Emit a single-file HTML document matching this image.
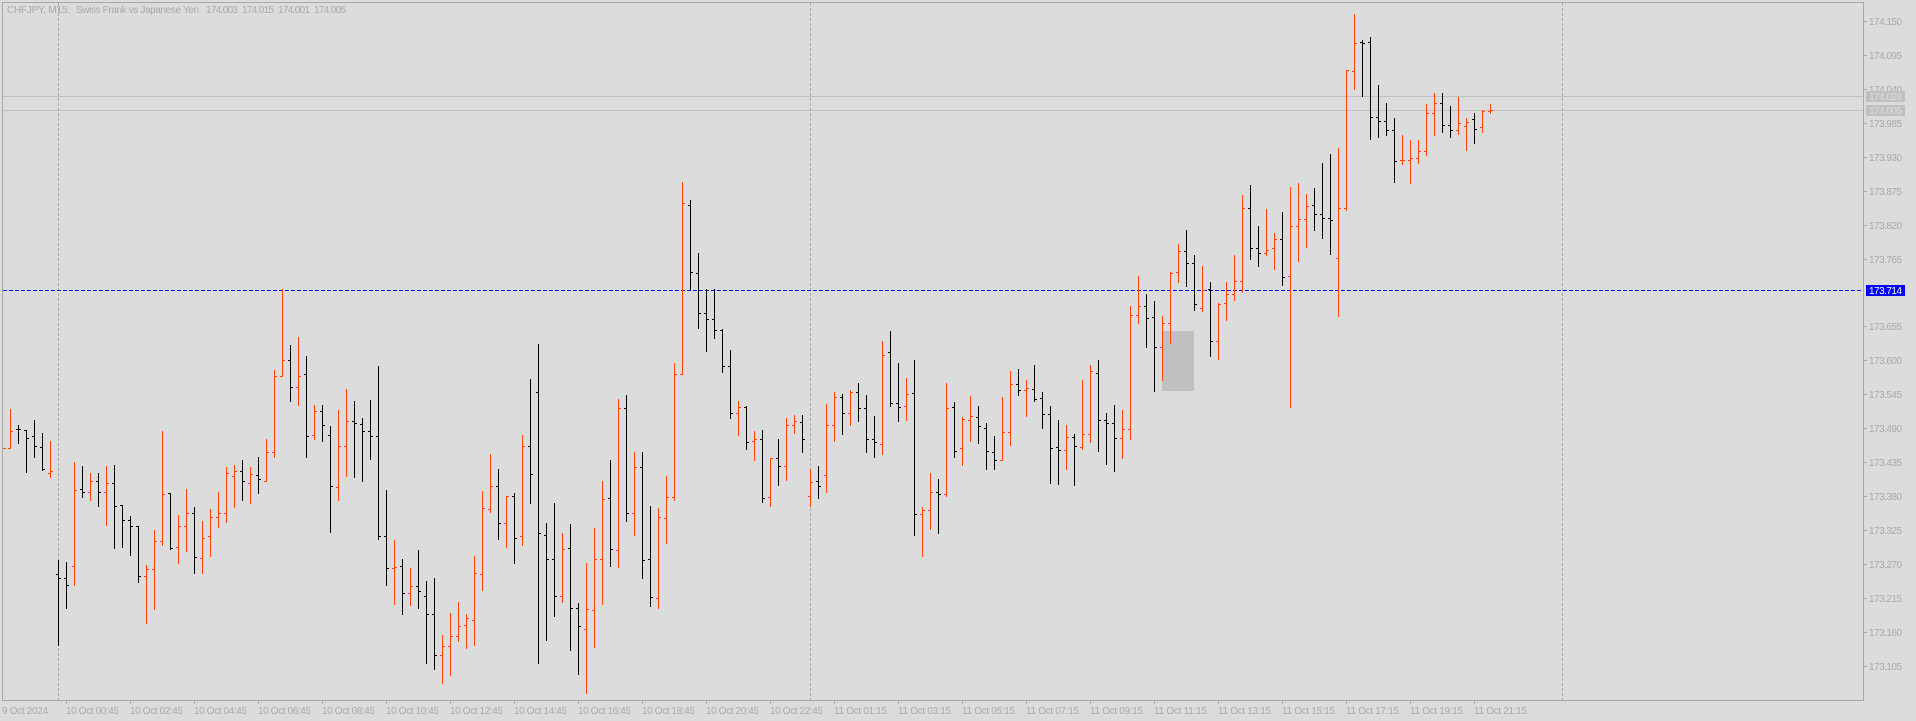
<!DOCTYPE html>
<html>
<head>
<meta charset="utf-8">
<title>CHFJPY, M15</title>
<style>
html,body{margin:0;padding:0;background:#dcdcdc;width:1916px;height:721px;overflow:hidden}
svg{display:block;position:absolute;left:0;top:0}
text{font-family:"Liberation Sans",sans-serif;font-size:10px;fill:#a9a9a9}
</style>
</head>
<body>
<svg width="1916" height="721" viewBox="0 0 1916 721" xmlns="http://www.w3.org/2000/svg">
<rect x="0" y="0" width="1916" height="721" fill="#dcdcdc"/>
<g shape-rendering="crispEdges">
<rect x="1162" y="331" width="32" height="60" fill="#c0c0c0"/>
<path d="M3 96.5H1863M3 110.5H1863" stroke="#c0c0c0" stroke-width="1" fill="none"/>
<path d="M58.5 3V700M810.5 3V700M1562.5 3V700" stroke="#a9a9a9" stroke-width="1" stroke-dasharray="3 2" fill="none"/>
<path d="M3 290.5H1863" stroke="#0000ff" stroke-width="1" stroke-dasharray="4 2" fill="none"/>
<path fill="none" stroke="#ff4500" stroke-width="1" d="M3 448.5h3M10.5 409V449M8 448.5h2M11 431.5h2M50.5 441V478M48 473.5h2M51 471.5h2M74.5 462V586M72 566.5h2M75 490.5h2M90.5 473V501M88 492.5h2M91 481.5h2M106.5 466V526M104 492.5h2M107 483.5h2M146.5 565V624M144 576.5h2M147 569.5h2M154.5 530V610M152 569.5h2M155 541.5h2M162.5 431V546M160 541.5h2M163 494.5h2M178.5 515V564M176 547.5h2M179 526.5h2M186.5 489V552M184 526.5h2M187 513.5h2M202.5 521V574M200 558.5h2M203 538.5h2M210.5 509V557M208 536.5h2M211 517.5h2M218.5 492V528M216 517.5h2M219 513.5h2M226.5 467V523M224 513.5h2M227 473.5h2M234.5 465V508M232 476.5h2M235 471.5h2M250.5 467V504M248 483.5h2M251 474.5h2M266.5 439V482M264 481.5h2M267 452.5h2M274.5 370V458M272 452.5h2M275 376.5h2M282.5 289V377M280 376.5h2M283 360.5h2M298.5 337V406M296 387.5h2M299 376.5h2M314.5 405V440M312 435.5h2M315 411.5h2M338.5 410V501M336 487.5h2M339 446.5h2M346.5 389V477M344 446.5h2M347 421.5h2M394.5 540V605M392 568.5h2M395 567.5h2M410.5 568V606M408 593.5h2M411 586.5h2M442.5 635V684M440 655.5h2M443 646.5h2M450.5 613V676M448 646.5h2M451 636.5h2M458.5 602V642M456 636.5h2M459 626.5h2M466.5 614V649M464 625.5h2M467 618.5h2M474.5 556V646M472 620.5h2M475 573.5h2M482.5 491V591M480 574.5h2M483 508.5h2M490.5 454V513M488 509.5h2M491 486.5h2M506.5 496V548M504 523.5h2M507 496.5h2M522.5 435V546M520 536.5h2M523 446.5h2M562.5 533V603M560 596.5h2M563 549.5h2M586.5 563V694M584 629.5h2M587 609.5h2M594.5 528V648M592 610.5h2M595 559.5h2M602.5 481V605M600 559.5h2M603 499.5h2M618.5 399V568M616 550.5h2M619 408.5h2M634.5 452V536M632 513.5h2M635 467.5h2M658.5 508V609M656 598.5h2M659 517.5h2M666.5 476V544M664 518.5h2M667 497.5h2M674.5 363V501M672 497.5h2M675 374.5h2M682.5 182V375M680 374.5h2M683 203.5h2M738.5 401V436M736 413.5h2M739 407.5h2M754.5 431V461M752 441.5h2M755 439.5h2M770.5 458V507M768 497.5h2M771 458.5h2M786.5 418V481M784 466.5h2M787 425.5h2M794.5 415V434M792 425.5h2M795 421.5h2M810.5 469V507M808 496.5h2M811 482.5h2M826.5 404V493M824 475.5h2M827 425.5h2M834.5 392V442M832 425.5h2M835 397.5h2M850.5 390V426M848 413.5h2M851 392.5h2M882.5 341V455M880 444.5h2M883 355.5h2M906.5 378V421M904 406.5h2M907 394.5h2M922.5 507V557M920 514.5h2M923 510.5h2M930.5 473V530M928 510.5h2M931 492.5h2M946.5 383V497M944 494.5h2M947 408.5h2M962.5 417V466M960 448.5h2M963 419.5h2M970.5 396V442M968 420.5h2M971 416.5h2M1002.5 397V461M1000 460.5h2M1003 432.5h2M1010.5 371V446M1008 432.5h2M1011 384.5h2M1026.5 380V417M1024 390.5h2M1027 388.5h2M1066.5 425V470M1064 450.5h2M1067 437.5h2M1082.5 380V450M1080 447.5h2M1083 434.5h2M1090.5 365V443M1088 434.5h2M1091 371.5h2M1122.5 410V459M1120 438.5h2M1123 429.5h2M1130.5 306V440M1128 429.5h2M1131 315.5h2M1138.5 276V324M1136 315.5h2M1139 306.5h2M1162.5 316V381M1160 347.5h2M1163 323.5h2M1170.5 272V344M1168 323.5h2M1171 273.5h2M1178.5 244V283M1176 272.5h2M1179 251.5h2M1202.5 266V312M1200 308.5h2M1203 290.5h2M1218.5 303V360M1216 341.5h2M1219 304.5h2M1226.5 282V321M1224 303.5h2M1227 294.5h2M1234.5 255V301M1232 294.5h2M1235 281.5h2M1242.5 195V293M1240 281.5h2M1243 208.5h2M1266.5 209V256M1264 253.5h2M1267 250.5h2M1274.5 233V270M1272 248.5h2M1275 239.5h2M1290.5 187V408M1288 276.5h2M1291 226.5h2M1298.5 183V262M1296 226.5h2M1299 219.5h2M1306.5 194V248M1304 219.5h2M1307 206.5h2M1338.5 148V317M1336 258.5h2M1339 208.5h2M1346.5 70V211M1344 208.5h2M1347 70.5h2M1354.5 14V90M1352 71.5h2M1355 43.5h2M1402.5 135V165M1400 160.5h2M1403 160.5h2M1410.5 140V184M1408 160.5h2M1411 158.5h2M1418.5 140V164M1416 158.5h2M1419 151.5h2M1426.5 104V156M1424 151.5h2M1427 113.5h2M1434.5 93V136M1432 113.5h2M1435 103.5h2M1458.5 97V135M1456 130.5h2M1459 123.5h2M1466.5 118V151M1464 126.5h2M1467 122.5h2M1482.5 110V133M1480 127.5h2M1483 111.5h2M1490.5 104V114M1488 111.5h2M1491 110.5h2"/>
<path fill="none" stroke="#000000" stroke-width="1" d="M18.5 425V444M16 429.5h2M19 429.5h2M26.5 430V473M24 430.5h2M27 438.5h2M34.5 420V458M32 436.5h2M35 446.5h2M42.5 433V471M40 447.5h2M43 469.5h2M58.5 560V646M56 574.5h2M59 578.5h2M66.5 562V609M64 578.5h2M67 585.5h2M82.5 466V498M80 489.5h2M83 492.5h2M98.5 473V507M96 481.5h2M99 492.5h2M114.5 465V549M112 483.5h2M115 506.5h2M122.5 505V548M120 505.5h2M123 520.5h2M130.5 516V556M128 520.5h2M131 526.5h2M138.5 526V583M136 526.5h2M139 576.5h2M170.5 493V550M168 493.5h2M171 548.5h2M194.5 507V574M192 513.5h2M195 557.5h2M242.5 460V501M240 471.5h2M243 481.5h2M258.5 457V494M256 475.5h2M259 479.5h2M290.5 345V402M288 360.5h2M291 387.5h2M306.5 356V458M304 374.5h2M307 436.5h2M322.5 405V442M320 411.5h2M323 425.5h2M330.5 426V533M328 435.5h2M331 486.5h2M354.5 401V478M352 421.5h2M355 423.5h2M362.5 418V482M360 424.5h2M363 431.5h2M370.5 400V460M368 431.5h2M371 436.5h2M378.5 366V540M376 436.5h2M379 536.5h2M386.5 490V586M384 536.5h2M387 568.5h2M402.5 559V615M400 566.5h2M403 593.5h2M418.5 550V609M416 586.5h2M419 591.5h2M426.5 581V664M424 596.5h2M427 614.5h2M434.5 578V670M432 614.5h2M435 655.5h2M498.5 469V540M496 486.5h2M499 523.5h2M514.5 493V564M512 496.5h2M515 538.5h2M530.5 379V504M528 446.5h2M531 474.5h2M538.5 344V664M536 392.5h2M539 533.5h2M546.5 523V641M544 535.5h2M547 559.5h2M554.5 503V617M552 559.5h2M555 596.5h2M570.5 524V651M568 548.5h2M571 608.5h2M578.5 603V675M576 608.5h2M579 626.5h2M610.5 460V567M608 498.5h2M611 549.5h2M626.5 395V522M624 408.5h2M627 513.5h2M642.5 452V579M640 467.5h2M643 560.5h2M650.5 506V607M648 559.5h2M651 597.5h2M690.5 200V290M688 205.5h2M691 272.5h2M698.5 253V329M696 273.5h2M699 313.5h2M706.5 289V352M704 313.5h2M707 319.5h2M714.5 289V339M712 319.5h2M715 330.5h2M722.5 329V373M720 330.5h2M723 366.5h2M730.5 350V419M728 366.5h2M731 413.5h2M746.5 406V450M744 407.5h2M747 442.5h2M762.5 430V503M760 439.5h2M763 498.5h2M778.5 439V486M776 458.5h2M779 466.5h2M802.5 415V453M800 422.5h2M803 439.5h2M818.5 466V499M816 481.5h2M819 486.5h2M842.5 394V435M840 397.5h2M843 413.5h2M858.5 383V422M856 392.5h2M859 408.5h2M866.5 395V453M864 408.5h2M867 439.5h2M874.5 416V458M872 439.5h2M875 442.5h2M890.5 331V407M888 352.5h2M891 403.5h2M898.5 363V422M896 403.5h2M899 407.5h2M914.5 360V536M912 393.5h2M915 514.5h2M938.5 479V534M936 492.5h2M939 494.5h2M954.5 402V458M952 407.5h2M955 451.5h2M978.5 406V444M976 417.5h2M979 426.5h2M986.5 423V470M984 428.5h2M987 451.5h2M994.5 436V470M992 452.5h2M995 460.5h2M1018.5 369V396M1016 384.5h2M1019 390.5h2M1034.5 365V402M1032 389.5h2M1035 399.5h2M1042.5 392V429M1040 398.5h2M1043 414.5h2M1050.5 406V484M1048 414.5h2M1051 448.5h2M1058.5 420V485M1056 447.5h2M1059 450.5h2M1074.5 434V486M1072 437.5h2M1075 446.5h2M1098.5 360V452M1096 373.5h2M1099 420.5h2M1106.5 413V465M1104 420.5h2M1107 423.5h2M1114.5 405V472M1112 423.5h2M1115 438.5h2M1146.5 294V348M1144 306.5h2M1147 318.5h2M1154.5 301V392M1152 317.5h2M1155 347.5h2M1186.5 230V287M1184 251.5h2M1187 263.5h2M1194.5 255V311M1192 263.5h2M1195 304.5h2M1210.5 282V357M1208 289.5h2M1211 341.5h2M1250.5 185V260M1248 208.5h2M1251 248.5h2M1258.5 226V267M1256 248.5h2M1259 253.5h2M1282.5 212V286M1280 239.5h2M1283 277.5h2M1314.5 188V231M1312 205.5h2M1315 214.5h2M1322.5 163V239M1320 214.5h2M1323 218.5h2M1330.5 154V255M1328 218.5h2M1331 220.5h2M1362.5 40V97M1360 42.5h2M1363 43.5h2M1370.5 37V140M1368 42.5h2M1371 117.5h2M1378.5 85V138M1376 117.5h2M1379 121.5h2M1386.5 103V136M1384 121.5h2M1387 130.5h2M1394.5 118V183M1392 130.5h2M1395 161.5h2M1442.5 93V133M1440 103.5h2M1443 125.5h2M1450.5 106V138M1448 125.5h2M1451 130.5h2M1474.5 113V144M1472 119.5h2M1475 129.5h2"/>
<path d="M2.5 2.5H1863.5V700.5H2.5Z" fill="none" stroke="#a9a9a9" stroke-width="1"/>
<path fill="none" stroke="#a9a9a9" stroke-width="1" d="M1864 21.5h3M1864 55.5h3M1864 89.5h3M1864 123.5h3M1864 157.5h3M1864 191.5h3M1864 225.5h3M1864 259.5h3M1864 326.5h3M1864 360.5h3M1864 394.5h3M1864 428.5h3M1864 462.5h3M1864 496.5h3M1864 530.5h3M1864 564.5h3M1864 598.5h3M1864 632.5h3M1864 666.5h3"/>
<path fill="none" stroke="#a9a9a9" stroke-width="1" d="M66.5 701v3M130.5 701v3M194.5 701v3M258.5 701v3M322.5 701v3M386.5 701v3M450.5 701v3M514.5 701v3M578.5 701v3M642.5 701v3M706.5 701v3M770.5 701v3M834.5 701v3M898.5 701v3M962.5 701v3M1026.5 701v3M1090.5 701v3M1154.5 701v3M1218.5 701v3M1282.5 701v3M1346.5 701v3M1410.5 701v3M1474.5 701v3"/>
</g>
<text x="7" y="13" textLength="63">CHFJPY, M15:</text>
<text x="76" y="13" textLength="123">Swiss Frank vs Japanese Yen</text>
<text x="206" y="13" textLength="32">174.003</text>
<text x="242" y="13" textLength="32">174.015</text>
<text x="278" y="13" textLength="32">174.001</text>
<text x="314" y="13" textLength="32">174.005</text>
<g>
<text x="1869" y="25" textLength="33">174.150</text>
<text x="1869" y="59" textLength="33">174.095</text>
<text x="1869" y="93" textLength="33">174.040</text>
<text x="1869" y="127" textLength="33">173.985</text>
<text x="1869" y="161" textLength="33">173.930</text>
<text x="1869" y="195" textLength="33">173.875</text>
<text x="1869" y="229" textLength="33">173.820</text>
<text x="1869" y="263" textLength="33">173.765</text>
<text x="1869" y="330" textLength="33">173.655</text>
<text x="1869" y="364" textLength="33">173.600</text>
<text x="1869" y="398" textLength="33">173.545</text>
<text x="1869" y="432" textLength="33">173.490</text>
<text x="1869" y="466" textLength="33">173.435</text>
<text x="1869" y="500" textLength="33">173.380</text>
<text x="1869" y="534" textLength="33">173.325</text>
<text x="1869" y="568" textLength="33">173.270</text>
<text x="1869" y="602" textLength="33">173.215</text>
<text x="1869" y="636" textLength="33">173.160</text>
<text x="1869" y="670" textLength="33">173.105</text>
</g>
<g shape-rendering="crispEdges">
<rect x="1866" y="91" width="39" height="11" fill="#c0c0c0"/>
<rect x="1866" y="105" width="39" height="11" fill="#c0c0c0"/>
<rect x="1866" y="285" width="39" height="11" fill="#0000ff"/>
</g>
<text x="1869" y="100" textLength="33" style="fill:#dcdcdc">174.028</text>
<text x="1869" y="114" textLength="33" style="fill:#dcdcdc">174.005</text>
<text x="1869" y="294" textLength="33" style="fill:#ffffff">173.714</text>
<g>
<text x="2" y="714" textLength="46">9 Oct 2024</text>
<text x="66" y="714" textLength="53">10 Oct 00:45</text>
<text x="130" y="714" textLength="53">10 Oct 02:45</text>
<text x="194" y="714" textLength="53">10 Oct 04:45</text>
<text x="258" y="714" textLength="53">10 Oct 06:45</text>
<text x="322" y="714" textLength="53">10 Oct 08:45</text>
<text x="386" y="714" textLength="53">10 Oct 10:45</text>
<text x="450" y="714" textLength="53">10 Oct 12:45</text>
<text x="514" y="714" textLength="53">10 Oct 14:45</text>
<text x="578" y="714" textLength="53">10 Oct 16:45</text>
<text x="642" y="714" textLength="53">10 Oct 18:45</text>
<text x="706" y="714" textLength="53">10 Oct 20:45</text>
<text x="770" y="714" textLength="53">10 Oct 22:45</text>
<text x="834" y="714" textLength="53">11 Oct 01:15</text>
<text x="898" y="714" textLength="53">11 Oct 03:15</text>
<text x="962" y="714" textLength="53">11 Oct 05:15</text>
<text x="1026" y="714" textLength="53">11 Oct 07:15</text>
<text x="1090" y="714" textLength="53">11 Oct 09:15</text>
<text x="1154" y="714" textLength="53">11 Oct 11:15</text>
<text x="1218" y="714" textLength="53">11 Oct 13:15</text>
<text x="1282" y="714" textLength="53">11 Oct 15:15</text>
<text x="1346" y="714" textLength="53">11 Oct 17:15</text>
<text x="1410" y="714" textLength="53">11 Oct 19:15</text>
<text x="1474" y="714" textLength="53">11 Oct 21:15</text>
</g>
</svg>
</body>
</html>
